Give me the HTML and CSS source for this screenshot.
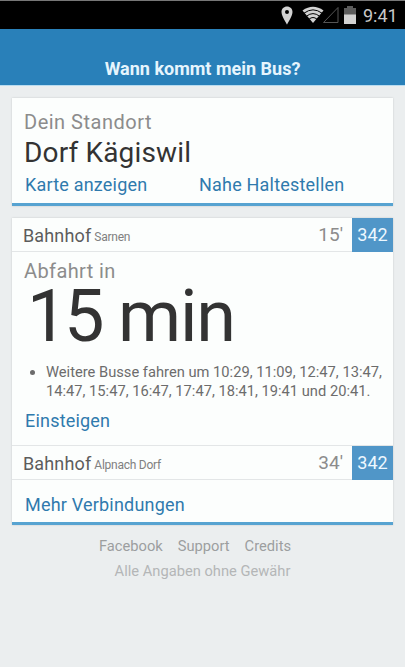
FILE: index.html
```html
<!DOCTYPE html>
<html lang="de">
<head>
  <meta charset="UTF-8">
  <meta name="viewport" content="width=device-width, initial-scale=1.0">
  <title>Wann kommt mein Bus?</title>
  <link rel="stylesheet" href="styles.css">
</head>
<body>
  <div class="statusbar">
    <svg class="icon-pin" width="12" height="19" viewBox="0 0 12 19">
      <path fill="#d2d2d2" fill-rule="evenodd" d="M6 0.5C2.8 0.5 0.5 2.8 0.5 6c0 4 5.5 12.5 5.5 12.5S11.500 10 11.500 6C11.500 2.800 9.200 0.500 6 0.500zM6 4a2 2 0 1 1 0 4a2 2 0 0 1 0-4z"/>
    </svg>
    <svg class="icon-signal" width="37" height="18" viewBox="0 0 37 18">
      <path fill="#d2d2d2" d="M0.500 4.500Q11 -3 21.500 4.500L11 17z"/>
      <g fill="none" stroke="#000" stroke-width="1">
        <path d="M2 7.200Q11 0.500 20 7.200"/>
        <path d="M4.500 10.200Q11 5 17.500 10.200"/>
        <path d="M7 13.200Q11 9.800 15 13.200"/>
      </g>
      <path fill="none" stroke="#555" d="M21.500 16.500H36V1.500z"/>
    </svg>
    <svg class="icon-battery" width="12" height="18" viewBox="0 0 12 18">
      <path fill="#5c5c5c" d="M3 0h6v2h3v7H0V2h3z"/>
      <path fill="#d2d2d2" d="M0 8.500h12V18H0z"/>
    </svg>
    <span class="clock">9:41</span>
  </div>

  <header class="header">
    <h1>Wann kommt mein Bus?</h1>
  </header>

  <main>
    <section class="card location">
      <div class="label">Dein Standort</div>
      <div class="place">Dorf Kägiswil</div>
      <div class="actions">
        <a class="link link-map">Karte anzeigen</a>
        <a class="link link-near">Nahe Haltestellen</a>
      </div>
    </section>

    <section class="card">
      <div class="row">
        <span class="stop">Bahnhof</span>
        <span class="town">Sarnen</span>
        <span class="wait">15'</span>
        <span class="line">342</span>
      </div>
      <div class="details">
        <div class="label label-departure">Abfahrt in</div>
        <div class="countdown"><span class="number">15</span><span class="unit">min</span></div>
        <ul class="more">
          <li>Weitere Busse fahren um 10:29, 11:09, 12:47, 13:47,<br>14:47, 15:47, 16:47, 17:47, 18:41, 19:41 und 20:41.</li>
        </ul>
        <a class="link">Einsteigen</a>
      </div>
      <div class="row row-next">
        <span class="stop">Bahnhof</span>
        <span class="town">Alpnach Dorf</span>
        <span class="wait">34'</span>
        <span class="line">342</span>
      </div>
      <div class="card-footer">
        <a class="link">Mehr Verbindungen</a>
      </div>
    </section>
  </main>

  <footer class="footer">
    <div class="footer-links">
      <a>Facebook</a><a>Support</a><a>Credits</a>
    </div>
    <div class="disclaimer">Alle Angaben ohne Gewähr</div>
  </footer>
</body>
</html>
```
FILE: styles.css
```css
* {
  box-sizing: border-box;
}

body {
  margin: 0;
  min-height: 667px;
  background-color: #ebeeef;
  font-family: Roboto, "Liberation Sans", sans-serif;
  color: #333;
  overflow: hidden;
}

.statusbar {
  display: flex;
  align-items: center;
  justify-content: flex-end;
  height: 29px;
  padding-right: 7px;
  background-color: #000;
  border-top: 1px solid #777;
}

.icon-signal {
  margin-left: 9px;
}

.icon-battery {
  margin-left: 5px;
}

.clock {
  margin-left: 7px;
  width: 35px;
  font-size: 18px;
  line-height: 31px;
  color: #c8c8c8;
}

.header {
  height: 57px;
  padding-top: 28px;
  background-color: #2980b9;
  border-bottom: 1px solid #b9dcf0;
  text-align: center;
}

.header h1 {
  margin: 0;
  font-size: 18px;
  font-weight: 700;
  line-height: 24px;
  color: #e6f5fd;
}

main {
  padding: 12px 12px 0;
}

.card {
  margin-bottom: 12px;
  width: 381px;
  background-color: #fcfefd;
  border-bottom: 3px solid #57a3d1;
  box-shadow: 0 0 2px rgba(0, 0, 0, 0.15);
}

.location {
  height: 108px;
  padding: 12px 12px 0;
}

.label {
  font-size: 20px;
  line-height: 24px;
  letter-spacing: 0.5px;
  color: #8c8c8c;
}

.label-departure {
  letter-spacing: 0.4px;
}

.place {
  padding-top: 1px;
  font-size: 28px;
  line-height: 35px;
  letter-spacing: 0.15px;
}

.actions {
  display: flex;
}

.link {
  display: block;
  padding-left: 1px;
  font-size: 18px;
  line-height: 30px;
  letter-spacing: 0.2px;
  color: #2f7aad;
}

.link-map {
  width: 175px;
}

.link-near {
  padding-left: 0;
}

.row {
  display: flex;
  height: 34px;
  padding-left: 11px;
  line-height: 35px;
  border-bottom: 1px solid #e3e6e7;
}

.row-next {
  height: 35px;
  border-top: 1px solid #e3e6e7;
}

.stop {
  font-size: 18px;
  letter-spacing: 0.15px;
  color: #5c5c5c;
}

.town {
  margin-left: 3px;
  padding-top: 2px;
  font-size: 12px;
  letter-spacing: -0.25px;
  color: #808080;
}

.wait {
  margin-left: auto;
  margin-right: 9px;
  font-size: 19px;
  line-height: 33px;
  color: #8c8c8c;
}

.line {
  width: 41px;
  height: 34px;
  background-color: #5096c8;
  font-size: 18px;
  line-height: 33px;
  text-align: center;
  color: #edf8ff;
}

.details {
  height: 193px;
  padding: 7px 12px 0;
}

.countdown {
  display: flex;
  gap: 17px;
  padding: 1px 0 0 3px;
  font-size: 72px;
  line-height: 66px;
  letter-spacing: -1.2px;
}

.number {
  letter-spacing: -3.5px;
}

.more {
  margin: 13px 0 5px;
  padding-left: 22px;
  font-size: 14.7px;
  line-height: 19px;
  color: #6c6c6c;
  white-space: nowrap;
}

.card-footer {
  height: 42px;
  padding: 10px 12px 0;
}

.footer {
  margin-top: -3px;
  text-align: center;
  font-size: 14.7px;
  line-height: 25px;
  color: #9c9e9f;
}

.footer-links a {
  margin-right: 15px;
}

.disclaimer {
  color: #b4b6b7;
}
```
